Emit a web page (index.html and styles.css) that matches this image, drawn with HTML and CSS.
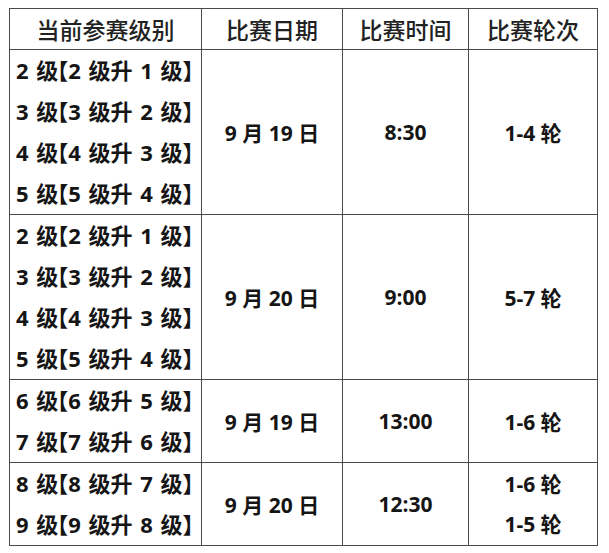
FILE: index.html
```html
<!DOCTYPE html>
<html lang="zh">
<head>
<meta charset="utf-8">
<link rel="stylesheet" href="styles.css">
</head>
<body>
<table class="sched">
  <colgroup>
    <col class="c1"><col class="c2"><col class="c3"><col class="c4">
  </colgroup>
  <thead>
    <tr><th>当前参赛级别</th><th>比赛日期</th><th>比赛时间</th><th>比赛轮次</th></tr>
  </thead>
  <tbody>
    <tr>
      <td class="lvl"><div>2 级<span class="lb">【</span>2 级升 1 级】</div><div>3 级<span class="lb">【</span>3 级升 2 级】</div><div>4 级<span class="lb">【</span>4 级升 3 级】</div><div>5 级<span class="lb">【</span>5 级升 4 级】</div></td>
      <td class="date">9 月 19 日</td>
      <td class="time">8:30</td>
      <td class="round">1-4 轮</td>
    </tr>
    <tr>
      <td class="lvl"><div>2 级<span class="lb">【</span>2 级升 1 级】</div><div>3 级<span class="lb">【</span>3 级升 2 级】</div><div>4 级<span class="lb">【</span>4 级升 3 级】</div><div>5 级<span class="lb">【</span>5 级升 4 级】</div></td>
      <td class="date">9 月 20 日</td>
      <td class="time">9:00</td>
      <td class="round">5-7 轮</td>
    </tr>
    <tr>
      <td class="lvl"><div>6 级<span class="lb">【</span>6 级升 5 级】</div><div>7 级<span class="lb">【</span>7 级升 6 级】</div></td>
      <td class="date">9 月 19 日</td>
      <td class="time">13:00</td>
      <td class="round">1-6 轮</td>
    </tr>
    <tr>
      <td class="lvl"><div>8 级<span class="lb">【</span>8 级升 7 级】</div><div>9 级<span class="lb">【</span>9 级升 8 级】</div></td>
      <td class="date">9 月 20 日</td>
      <td class="time">12:30</td>
      <td class="round"><div>1-6 轮</div><div>1-5 轮</div></td>
    </tr>
  </tbody>
</table>
</body>
</html>
```
FILE: styles.css
```css
html, body {
  margin: 0;
  padding: 0;
  background: #ffffff;
}
body {
  padding: 8px 0 0 9px;
  font-family: "Open Sans", "Noto Sans CJK SC", sans-serif;
  color: #151515;
}
.sched {
  border-collapse: collapse;
  table-layout: fixed;
  width: 588px;
}
.c1 { width: 192px; }
.c2 { width: 141px; }
.c3 { width: 126px; }
.c4 { width: 129px; }
.sched th, .sched td {
  border: 1.5px solid #4a4a4a;
  padding: 0;
  text-align: center;
  vertical-align: middle;
}
.sched th {
  height: 40px;
  font-family: "Noto Sans CJK SC", sans-serif;
  font-weight: 500;
  font-size: 23px;
  color: #222;
}
.sched td div {
  height: 41px;
  line-height: 41px;
}
.sched td.lvl {
  text-align: left;
  padding-left: 6px;
  font-weight: 700;
  font-size: 22px;
  word-spacing: 2px;
  white-space: nowrap;
}
.lb {
  font-feature-settings: "halt";
  margin-left: -1px;
}
.sched td.date {
  font-size: 21px;
  font-weight: 700;
}
.sched td.time {
  font-size: 21px;
  font-weight: 700;
}
.sched td.round {
  font-size: 21px;
  font-weight: 700;
}
.sched td.round div {
  height: 40px;
  line-height: 40px;
}
```
